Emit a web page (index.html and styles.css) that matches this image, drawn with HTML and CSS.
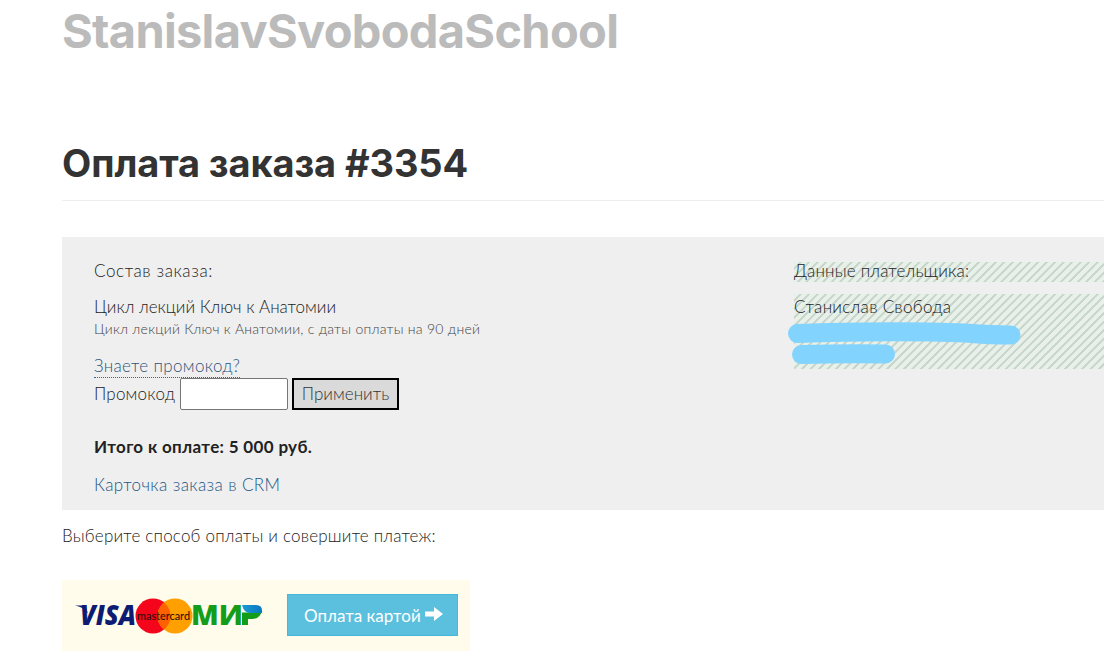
FILE: index.html
```html
<!DOCTYPE html>
<html lang="ru">

<head>
  <meta charset="UTF-8">
  <meta name="viewport" content="width=device-width, initial-scale=1.0">
  <title>Оплата заказа #3354</title>
  <link rel="stylesheet" href="styles.css">
</head>

<body>
  <div class="page">
    <div class="site-name">StanislavSvobodaSchool</div>
    <h1>Оплата заказа #3354</h1>

    <div class="order">
      <div class="order-info">
        <div class="label">Состав заказа:</div>
        <div class="product">Цикл лекций Ключ к Анатомии</div>
        <div class="product-note">Цикл лекций Ключ к Анатомии, с даты оплаты на 90 дней</div>
        <div class="promo-toggle"><a href="#" class="promo-link">Знаете промокод?</a></div>
        <div class="promo-form">
          <label for="promo" class="promo-label">Промокод</label>
          <input type="text" id="promo" name="promo">
          <button type="button">Применить</button>
        </div>
        <div class="total">Итого к оплате: 5 000 руб.</div>
        <div class="crm"><a href="#">Карточка заказа в CRM</a></div>
      </div>
      <div class="payer">
        <div class="payer-title striped">Данные плательщика:</div>
        <div class="payer-data striped">
          <div class="payer-name">Станислав Свобода</div>
          <svg class="marker" width="240" height="50" viewBox="0 0 240 50">
            <path d="M15.500 14.500C70 12.500 150 12 190 14.500Q208 16 229 16" />
            <path d="M19.500 35.500Q60 34.500 103.500 35" />
          </svg>
        </div>
      </div>
    </div>

    <div class="choose">Выберите способ оплаты и совершите платеж:</div>

    <div class="payment">
      <svg class="cards" width="190" height="42" viewBox="0 0 190 42">
        <defs>
          <linearGradient id="mir" x1="0" x2="1">
            <stop offset="0" stop-color="#1a9ad6" />
            <stop offset="1" stop-color="#0878bd" />
          </linearGradient>
        </defs>
        <path d="M0 11.500h10l3 8Q8 12.500 0 11.500z" fill="#0d1b72" />
        <text class="visa" x="5" y="31" textLength="56" lengthAdjust="spacingAndGlyphs">VISA</text>
        <circle cx="78" cy="22" r="17.500" fill="#f5051b" />
        <circle cx="100" cy="22" r="17.500" fill="#ff9f00" />
        <path d="M89 8.400a17.500 17.500 0 0 1 0 27.200a17.500 17.500 0 0 1 0-27.200z" fill="#ff6000" />
        <text class="mastercard" x="62" y="25.500" textLength="53" lengthAdjust="spacingAndGlyphs">mastercard</text>
        <text class="mir" x="116" y="31" textLength="70" lengthAdjust="spacingAndGlyphs">МИР</text>
        <path d="M166 10h21v22h-21z" fill="#fffcec" />
        <path d="M167 18.500h19.500Q184 25 177 25h-4v6h-6z" fill="#149c1b" />
        <path d="M167 11h14q7 0 6 8h-12q-6 0-8-8z" fill="url(#mir)" />
      </svg>
      <a href="#" class="pay-button">
        <span class="pay-text">Оплата картой</span>
        <svg class="arrow" width="18" height="16" viewBox="0 0 18 16">
          <path d="M0 5.500h9V1l9 7-9 7v-4.500H0z" fill="#fff" />
        </svg>
      </a>
    </div>
  </div>
</body>

</html>
```

FILE: styles.css
```css
* {
  box-sizing: border-box;
}

body {
  margin: 0;
  font-family: Lato, sans-serif;
  font-size: 17px;
  font-weight: 300;
  line-height: 25px;
  color: #222;
  background: #fff;
  overflow: hidden;
}

a {
  color: #1b5685;
  text-decoration: none;
}

.page {
  padding-left: 62px;
}

.site-name {
  height: 142px;
  padding-top: 1px;
  font-family: Inter, sans-serif;
  font-size: 47px;
  font-weight: 700;
  line-height: 60px;
  letter-spacing: -0.7px;
  color: #bbb;
}

h1 {
  height: 59px;
  margin: 0 0 36px;
  font-family: Inter, sans-serif;
  font-size: 38px;
  font-weight: 700;
  line-height: 43px;
  letter-spacing: -0.1px;
  color: #333;
  border-bottom: 1px solid #eee;
}

.order {
  display: flex;
  height: 273px;
  padding: 25px 0 0 32px;
  background: #efefef;
}

.order-info {
  width: 700px;
}

.label,
.payer-title {
  height: 20px;
  margin-bottom: 12px;
  line-height: 18px;
}

.label {
  letter-spacing: 0.6px;
}

.payer-title {
  letter-spacing: 0.2px;
}

.payer-name {
  letter-spacing: 0.3px;
}

.product-note {
  font-size: 14px;
  line-height: 20px;
  letter-spacing: 0.26px;
  color: #444;
}

.promo-toggle {
  height: 30px;
  margin-top: 14px;
}

.promo-link {
  display: inline-block;
  height: 24px;
  letter-spacing: 0.33px;
  line-height: 23px;
  color: #2f5478;
  border-bottom: 1px dotted #2f6593;
}

.promo-form {
  display: flex;
  gap: 4px;
  height: 32px;
  margin-top: -5px;
  line-height: 32px;
}

.promo-label {
  width: 82px;
  letter-spacing: 0.2px;
}

.promo-form input {
  width: 108px;
  height: 32px;
  border: 1px solid #767676;
  border-radius: 2px;
  background: #fff;
}

.promo-form button {
  width: 107px;
  height: 32px;
  padding: 0 0 1px;
  font: inherit;
  line-height: 25px;
  color: #333;
  background: #dadada;
  border: 2px solid #000;
}

.total {
  margin-top: 24px;
  font-weight: 700;
  letter-spacing: 0.33px;
}

.crm {
  margin-top: 13px;
  letter-spacing: 0.4px;
}

.payer {
  flex: 1;
}

.striped {
  background: repeating-linear-gradient(135deg, #e9f0ea 0 3.5px, #c6d6ca 4px 5.5px, #e9f0ea 6px);
}

.payer-data {
  height: 75px;
}

.marker {
  display: block;
  margin-left: -12px;
  fill: none;
  stroke: #82d4ff;
  stroke-width: 19px;
  stroke-linecap: round;
}

.choose {
  margin-top: 13px;
  letter-spacing: 0.2px;
}

.payment {
  display: flex;
  width: 408px;
  height: 71px;
  margin-top: 32px;
  padding: 14px 12px 14px 13px;
  background: #fffcec;
}

.cards {
  margin-right: 22px;
}

.visa,
.mir {
  font-family: "Open Sans", sans-serif;
  font-size: 28px;
  font-weight: 800;
}

.visa {
  font-style: italic;
  fill: #0d1b72;
}

.mir {
  fill: #149c1b;
}

.mastercard {
  font-size: 11px;
  font-weight: 500;
  fill: #30100a;
}

.pay-button {
  display: flex;
  align-items: center;
  gap: 4px;
  width: 171px;
  height: 42px;
  padding-left: 16px;
  color: #fff;
  background: #5bc0de;
  border: 1px solid #46b8da;
}

.pay-text {
  font-weight: 400;
}

.arrow {
  margin-bottom: 3px;
}
```
